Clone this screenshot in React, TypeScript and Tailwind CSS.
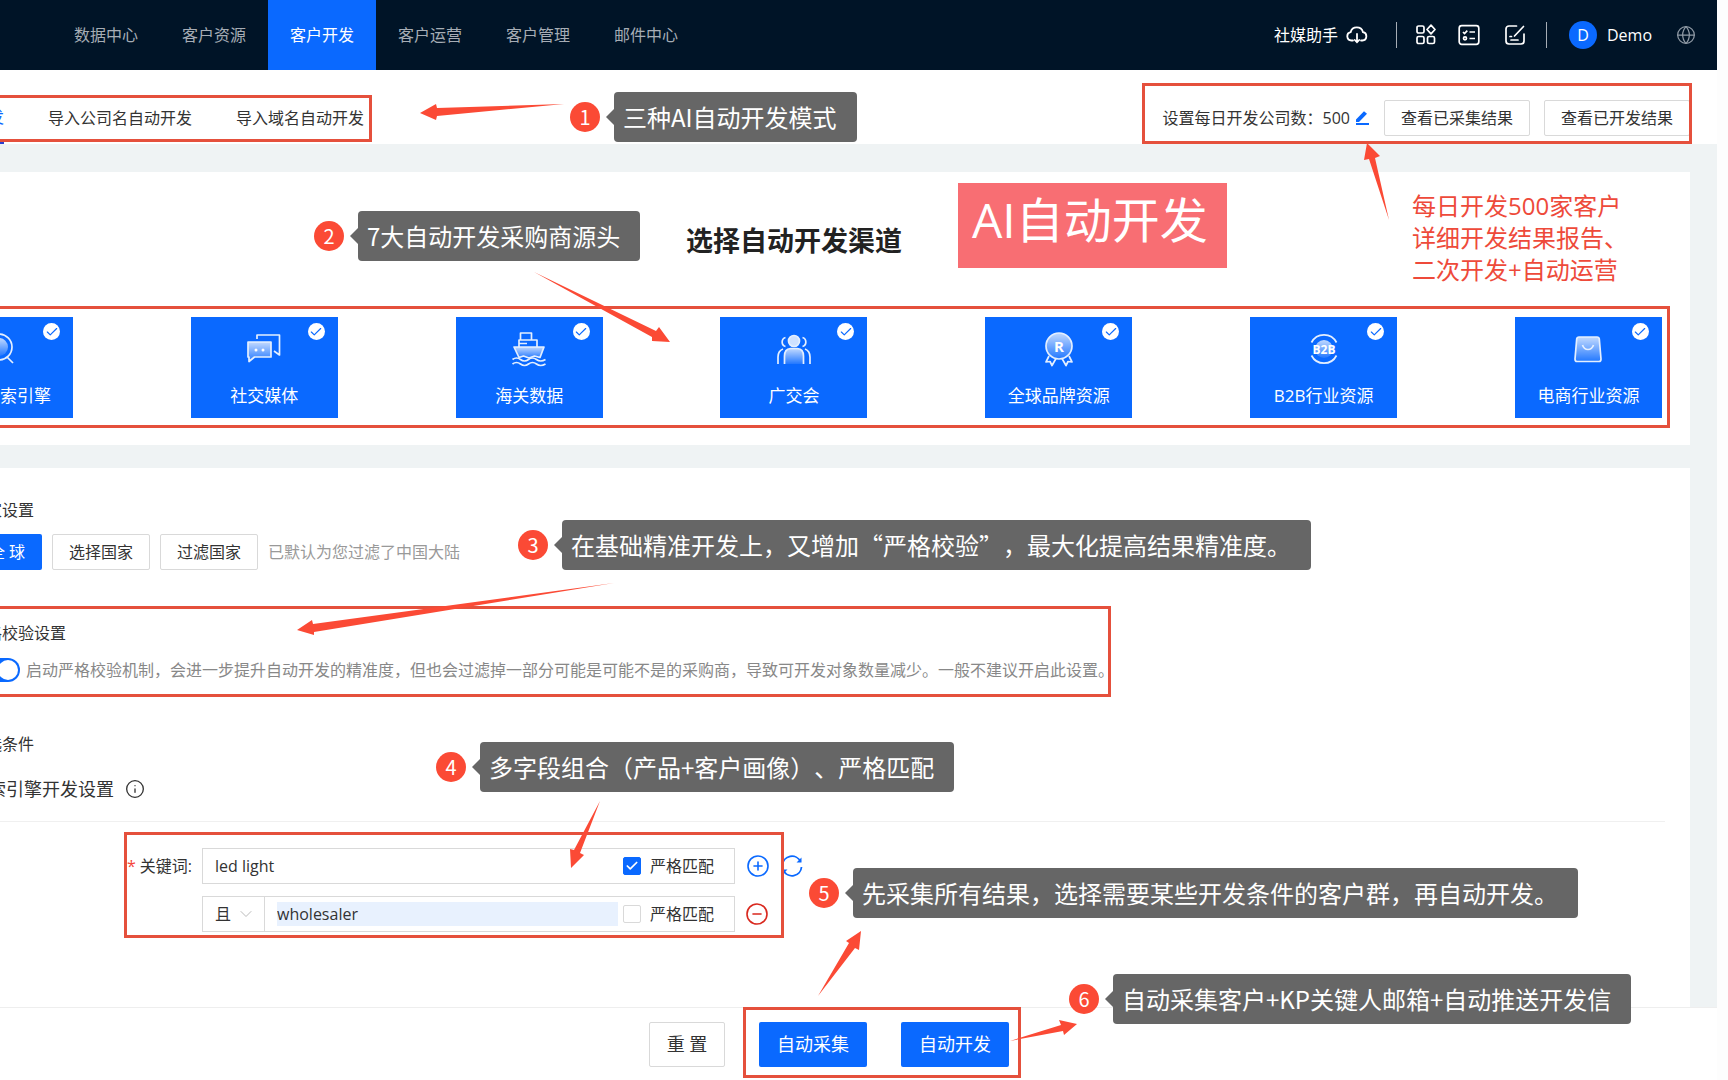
import { useState } from "react";
import type { ReactNode } from "react";
import { CirclePlus, CircleMinus, Check, ChevronDown, Globe, Info } from "lucide-react";

const navItems = ["数据中心", "客户资源", "客户开发", "客户运营", "客户管理", "邮件中心"];

function Header() {
  return (
    <header className="flex h-[70px] shrink-0 items-center justify-between bg-[#001427] pl-[52px] text-base text-white">
      <nav className="flex h-full">
        {navItems.map((item) => (
          <a
            key={item}
            href="#"
            className={`flex h-full items-center px-[22px] ${
              item === "客户开发" ? "bg-[#0a69ff] text-white" : "text-[#a6adb5]"
            }`}
          >
            {item}
          </a>
        ))}
      </nav>
      <div className="flex items-center pr-[21px]">
        <a href="#" className="flex items-center gap-2">
          社媒助手
          <svg className="h-5 w-[22px]" viewBox="0 0 22 20" fill="none" stroke="currentColor" strokeWidth="1.8" strokeLinecap="round">
            <path d="M7 15.5H5.4A4.2 4.2 0 0 1 4.6 7.2 6.4 6.4 0 0 1 17 7.2a4.2 4.2 0 0 1-.6 8.3H15" />
            <path d="M11 9v8M8.8 15l2.2 2.3 2.2-2.3" />
          </svg>
        </a>
        <span className="ml-7 h-[26px] w-px bg-[#a6adb5]" />
        <button type="button" aria-label="应用" className="ml-[18px]">
          <svg className="h-[22px] w-[22px]" viewBox="0 0 22 22" fill="none" stroke="currentColor" strokeWidth="1.7">
            <rect x="2" y="2" width="7" height="7" rx="1.6" />
            <rect x="2" y="12.5" width="7" height="7" rx="1.6" />
            <rect x="12.5" y="12.5" width="7" height="7" rx="1.6" />
            <path d="M16 1.2 20 5.5 16 9.8 12 5.5Z" strokeLinejoin="round" />
          </svg>
        </button>
        <button type="button" aria-label="任务" className="ml-[21px]">
          <svg className="h-[22px] w-[22px]" viewBox="0 0 22 22" fill="none" stroke="currentColor" strokeWidth="1.7">
            <rect x="1.2" y="1.7" width="19.6" height="18.6" rx="2.5" />
            <path d="M5 8l1.5 1.5L9.3 6.6M11.5 8H17M11.5 14.5H17" />
            <circle cx="7" cy="14.3" r="1.5" />
          </svg>
        </button>
        <button type="button" aria-label="编辑" className="ml-6">
          <svg className="h-[22px] w-[22px]" viewBox="0 0 22 22" fill="none" stroke="currentColor" strokeWidth="1.7" strokeLinecap="round">
            <path d="M12.5 2H5a3 3 0 0 0-3 3v12a3 3 0 0 0 3 3h12a3 3 0 0 0 3-3v-7M19.5 2.5 10.5 12M6 12.5h1.5M7 16h7" />
          </svg>
        </button>
        <span className="ml-5 h-[26px] w-px bg-[#a6adb5]" />
        <span className="ml-[22px] flex h-7 w-7 items-center justify-center rounded-full bg-[#0a69ff] text-base">D</span>
        <span className="ml-[10px]">Demo</span>
        <Globe className="ml-6 h-5 w-5 text-[#8f9aa5]" strokeWidth={1.5} />
      </div>
    </header>
  );
}

function OutlineButton({ children }: { children: ReactNode }) {
  return (
    <button type="button" className="h-9 rounded-xs border border-[#d9d9d9] bg-white px-4 text-base whitespace-nowrap text-[#333]">
      {children}
    </button>
  );
}

function Tabs() {
  return (
    <div className="flex h-[74px] shrink-0 items-center justify-between bg-white pt-[22px] pr-[27px] text-base text-[#333]">
      <div className="flex h-full items-center gap-11">
        <a href="#" className="-ml-3 flex h-full items-center border-b-2 border-[#2b3fd0] text-[#0a69ff]">
          发
        </a>
        <a href="#">导入公司名自动开发</a>
        <a href="#">导入域名自动开发</a>
      </div>
      <div className="flex items-center">
        <span>设置每日开发公司数：500</span>
        <button type="button" aria-label="修改" className="mr-[14px] ml-1">
          <svg className="h-4 w-4" viewBox="0 0 16 16" fill="#0a69ff">
            <path d="M2 9.5 10 1.2l3 2.6-8 8.2H2zM2 13h13v2H2z" />
          </svg>
        </button>
        <div className="flex gap-[14px]">
          <OutlineButton>查看已采集结果</OutlineButton>
          <OutlineButton>查看已开发结果</OutlineButton>
        </div>
      </div>
    </div>
  );
}

function IconBox({ children, shift = false }: { children: ReactNode; shift?: boolean }) {
  return (
    <svg
      className={`h-9 w-9 ${shift ? "-ml-[19px] self-start" : ""}`}
      viewBox="0 0 36 36"
      fill="none"
      stroke="#e4efff"
      strokeWidth="1.7"
      strokeLinejoin="round"
    >
      <defs>
        <linearGradient id="tint" x1="0" y1="0" x2="0" y2="1">
          <stop offset="0" stopColor="#fff" stopOpacity="0.75" />
          <stop offset="1" stopColor="#fff" stopOpacity="0.1" />
        </linearGradient>
      </defs>
      {children}
    </svg>
  );
}

const channels = [
  {
    name: "索引擎",
    icon: (
      <>
        <circle cx="18" cy="16" r="13" />
        <circle cx="18" cy="16" r="9" fill="url(#tint)" stroke="none" />
        <path d="M26 26l6 6" />
      </>
    ),
  },
  {
    name: "社交媒体",
    icon: (
      <>
        <path d="M2 11h23v15H8.500L3 30.500V26H2z" fill="url(#tint)" />
        <path d="M11 8V4h22.500v20L28 20" />
        <g fill="#fff" stroke="none">
          <circle cx="10" cy="19" r="1.5" />
          <circle cx="17" cy="19" r="1.5" />
        </g>
      </>
    ),
  },
  {
    name: "海关数据",
    icon: (
      <>
        <path d="M3 16h30l-4 10.500-5.500-1.500-5.500 2-5.500-2L8 26.500z" fill="url(#tint)" />
        <path d="M8 16V9h18v7M9.500 9V2h11v7M8 12.500h8" />
        <path d="M1.500 28.500q4-3 8 0t8 0 8 0 9 0M1.500 33q4-3 8 0t8 0 8 0 9 0" />
      </>
    ),
  },
  {
    name: "广交会",
    icon: (
      <>
        <circle cx="18" cy="10" r="5.5" fill="#fff" fillOpacity="0.8" />
        <path d="M8.500 33V25q0-7 6-7.500h7q6 .5 6 7.500v8" fill="url(#tint)" />
        <path d="M9.500 6.500a4.700 4.700 0 0 0 0 9M26.500 6.500a4.700 4.700 0 0 1 0 9M2 33v-7q0-6 5-8M34 33v-7q0-6-5-8" />
      </>
    ),
  },
  {
    name: "全球品牌资源",
    icon: (
      <>
        <circle cx="18" cy="15" r="13" fill="url(#tint)" />
        <path d="M8 25l-3 6 4-.5 2 4 4-7M28 25l3 6-4-.5-2 4-4-7" />
        <text x="18" y="21" textAnchor="middle" fontSize="15" fontWeight="700" fill="#fff" stroke="none">R</text>
      </>
    ),
  },
  {
    name: "B2B行业资源",
    icon: (
      <>
        <circle cx="18" cy="18" r="9" fill="url(#tint)" stroke="none" />
        <path d="M5.500 11.500a14 14 0 0 1 25 0M5.500 24.500a14 14 0 0 0 25 0" />
        <text x="18" y="22.5" textAnchor="middle" fontSize="12" fontWeight="700" fill="#fff" stroke="none">B2B</text>
      </>
    ),
  },
  {
    name: "电商行业资源",
    icon: (
      <>
        <path d="M9 6h18q2 0 2.300 2L31 28q0 2.500-2 2.500H7q-2 0-2-2.500L6.700 8Q7 6 9 6z" fill="url(#tint)" />
        <path d="M12.500 14q1.500 4.500 5.500 4.500t5.500-4.500" />
      </>
    ),
  },
];

function ChannelPanel() {
  return (
    <section className="mt-7 mr-[27px] bg-white pt-[51px] pb-[27px]">
      <h2 className="ml-[686px] text-[27px] leading-9 font-bold text-[#222]">选择自动开发渠道</h2>
      <div className="mt-[58px] mr-7 flex justify-between">
        {channels.map((c, i) => (
          <button
            key={c.name}
            type="button"
            className={`relative flex h-[101px] flex-col bg-[#0a69ff] pt-[14px] text-[17px] leading-6 text-white ${
              i === 0 ? "w-[73px] items-start" : "w-[147px] items-center"
            }`}
          >
            <IconBox shift={i === 0}>{c.icon}</IconBox>
            <span className="mt-[17px]">{c.name}</span>
            <span className="absolute top-[6px] right-[13px] flex h-[17px] w-[17px] items-center justify-center rounded-full bg-white">
              <Check className="h-[14px] w-[14px] text-[#0a69ff]" strokeWidth={2} />
            </span>
          </button>
        ))}
      </div>
    </section>
  );
}

function StrictBox({ id, defaultChecked }: { id: string; defaultChecked: boolean }) {
  const [checked, setChecked] = useState(defaultChecked);
  return (
    <label htmlFor={id} className="flex items-center gap-[9px] pr-5 whitespace-nowrap">
      <span className="relative flex h-[18px] w-[18px]">
        <input
          id={id}
          type="checkbox"
          checked={checked}
          onChange={() => setChecked(!checked)}
          className="h-[18px] w-[18px] appearance-none rounded-xs border border-[#d9d9d9] bg-white checked:border-[#0a69ff] checked:bg-[#0a69ff]"
        />
        {checked && <Check className="pointer-events-none absolute top-[2px] left-[2px] h-[14px] w-[14px] text-white" strokeWidth={3} />}
      </span>
      严格匹配
    </label>
  );
}

function SettingsPanel() {
  return (
    <section className="mt-[23px] mr-[27px] flex-1 bg-white pt-[30px] text-base text-[#333]">
      <h3 className="-ml-3.5 leading-6">家设置</h3>
      <div className="mt-3 flex items-center gap-[10px]">
        <button type="button" className="-ml-7 h-9 w-[70px] rounded-xs bg-[#0a69ff] text-white">
          全 球
        </button>
        <OutlineButton>选择国家</OutlineButton>
        <OutlineButton>过滤国家</OutlineButton>
        <span className="text-[#999]">已默认为您过滤了中国大陆</span>
      </div>

      <h3 className="mt-[51px] -ml-3.5 leading-6">格校验设置</h3>
      <div className="mt-[13px] flex items-center">
        <label className="flex items-center whitespace-nowrap text-[#888]">
          <input
            type="checkbox"
            role="switch"
            defaultChecked
            className="-ml-6 h-6 w-11 appearance-none rounded-full bg-[#0a69ff] before:mt-[2px] before:ml-[22px] before:block before:h-5 before:w-5 before:rounded-full before:bg-white"
          />
          <span className="ml-1.5">
            启动严格校验机制，会进一步提升自动开发的精准度，但也会过滤掉一部分可能是可能不是的采购商，导致可开发对象数量减少。一般不建议开启此设置。
          </span>
        </label>
      </div>

      <h3 className="mt-[50px] -ml-3.5 leading-6">选条件</h3>
      <div className="mr-[25px] flex items-center gap-[11px] border-b border-[#f0f0f0] pt-[21px] pb-5">
        <h4 className="-ml-3 text-lg leading-6">索引擎开发设置</h4>
        <Info className="h-5 w-5" strokeWidth={1.6} />
      </div>

      <div className="mt-[26px] flex items-center">
        <label htmlFor="kw" className="w-[202px] pl-[127px]">
          <span className="mr-1 text-[#f5463a]">*</span>关键词:
        </label>
        <div className="flex h-9 w-[533px] items-center border border-[#d9d9d9]">
          <input id="kw" defaultValue="led light" className="min-w-0 flex-1 px-3 outline-none" />
          <StrictBox id="strict-1" defaultChecked />
        </div>
        <button type="button" aria-label="添加" className="ml-[11px] text-[#0a69ff]">
          <CirclePlus className="h-6 w-6" strokeWidth={1.6} />
        </button>
        <button type="button" aria-label="刷新" className="ml-[10px] text-[#0a69ff]">
          <svg className="h-6 w-6" viewBox="0 0 24 24" fill="none" stroke="currentColor" strokeWidth="1.8">
            <path d="M2.500 11a9.500 9.500 0 0 1 18-3.500M21.500 13a9.500 9.500 0 0 1-18 3.500" />
            <path d="M21.500 3.500v5h-5zM2.500 20.500v-5h5z" fill="currentColor" stroke="none" />
          </svg>
        </button>
      </div>
      <div className="mt-3 ml-[202px] flex items-center">
        <div className="flex h-9 w-[533px] items-center border border-[#d9d9d9]">
          <div className="relative flex h-full w-[62px] items-center border-r border-[#d9d9d9]">
            <select aria-label="条件关系" className="h-full w-full appearance-none pl-3 outline-none">
              <option>且</option>
            </select>
            <ChevronDown className="pointer-events-none absolute right-2 h-5 w-5 text-[#bbb]" strokeWidth={1.2} />
          </div>
          <input
            aria-label="附加关键词"
            defaultValue="wholesaler"
            className="mr-[5px] ml-3 h-6 min-w-0 flex-1 bg-[#e8f1fe] outline-none"
          />
          <StrictBox id="strict-2" defaultChecked={false} />
        </div>
        <button type="button" aria-label="删除" className="ml-[10px] text-[#d9281e]">
          <CircleMinus className="h-6 w-6" strokeWidth={1.6} />
        </button>
      </div>
    </section>
  );
}

function Footer() {
  return (
    <footer className="flex h-[73px] shrink-0 items-center justify-center border-t border-[#eee] bg-white pr-[59px] text-lg">
      <button type="button" className="h-[45px] w-[76px] rounded-xs border border-[#d9d9d9] bg-white text-[#333]">重 置</button>
      <button type="button" className="ml-[34px] h-[45px] w-[108px] rounded-xs bg-[#0a69ff] text-white">自动采集</button>
      <button type="button" className="ml-[34px] h-[45px] w-[108px] rounded-xs bg-[#0a69ff] text-white">自动开发</button>
    </footer>
  );
}

function Callout({ n, place, children }: { n: number; place: string; children: ReactNode }) {
  return (
    <div className={`absolute flex items-center font-['Noto_Sans_CJK_SC',sans-serif] ${place}`}>
      <span className="flex h-[30px] w-[30px] items-center justify-center rounded-full bg-[#fb4a35] text-xl text-white">{n}</span>
      <span className="ml-1.5 border-y-[8px] border-r-[8px] border-y-transparent border-r-[#666]" />
      <span className="rounded bg-[#666] pr-5 pl-[9px] text-2xl leading-[50px] whitespace-nowrap text-white">{children}</span>
    </div>
  );
}

const frames = [
  "top-[95px] left-0 h-[47px] w-[372px] border-l-0",
  "top-[83px] left-[1142px] h-[61px] w-[550px]",
  "top-[306px] left-0 h-[122px] w-[1670px] border-l-0",
  "top-[606px] left-0 h-[91px] w-[1111px] border-l-0",
  "top-[832px] left-[124px] h-[106px] w-[660px]",
  "top-[1007px] left-[743px] h-[71px] w-[278px]",
];

// tip, head and tapered tail of each hand-drawn arrow
const arrows = [
  "420,113 436,104 437,108 564,104 437,116 436,120",
  "1367,143 1380,156 1375,158 1389,220 1369,159 1364,160",
  "670,342 659,327 656,331 534,272 652,337 652,341",
  "297,630 312,620 313,624 614,583 314,632 314,635",
  "571,868 570,849 574,850 600,801 580,853 584,855",
  "861,931 846,941 849,943 818,996 855,948 859,950",
  "1077,1024 1059,1020 1061,1025 1010,1041 1063,1031 1064,1035",
];

function Annotations() {
  return (
    <div className="pointer-events-none absolute inset-0 overflow-hidden">
      {frames.map((f) => (
        <div key={f} className={`absolute border-3 border-[#e5503c] ${f}`} />
      ))}
      <svg className="absolute inset-0 h-full w-full" fill="#fb4a35">
        {arrows.map((a) => (
          <polygon key={a} points={a} />
        ))}
      </svg>
      <Callout n={1} place="top-[92px] left-[570px]">三种AI自动开发模式</Callout>
      <Callout n={2} place="top-[211px] left-[314px]">7大自动开发采购商源头</Callout>
      <Callout n={3} place="top-[520px] left-[518px]">在基础精准开发上，又增加“严格校验”，最大化提高结果精准度。</Callout>
      <Callout n={4} place="top-[742px] left-[436px]">多字段组合（产品+客户画像）、严格匹配</Callout>
      <Callout n={5} place="top-[868px] left-[809px]">先采集所有结果，选择需要某些开发条件的客户群，再自动开发。</Callout>
      <Callout n={6} place="top-[974px] left-[1069px]">自动采集客户+KP关键人邮箱+自动推送开发信</Callout>
      <div className="absolute top-[183px] left-[958px] h-[85px] w-[269px] bg-[#f86e73] pl-[14px] text-5xl leading-[74px] whitespace-nowrap text-white">
        AI自动开发
      </div>
      <p className="absolute top-[190px] left-[1412px] text-2xl leading-8 whitespace-nowrap text-[#ee4a3a]">
        每日开发500家客户
        <br />
        详细开发结果报告、
        <br />
        二次开发+自动运营
      </p>
    </div>
  );
}

export default function App() {
  return (
    <div
      lang="zh-CN"
      className="relative min-h-screen overflow-hidden bg-[#fdfdfd] pr-[11px] font-['Open_Sans','Noto_Sans_CJK_SC',sans-serif] [text-spacing-trim:space-all]"
    >
      <div className="flex min-h-screen flex-col bg-[#eff3f4]">
        <Header />
        <Tabs />
        <ChannelPanel />
        <SettingsPanel />
        <Footer />
      </div>
      <Annotations />
    </div>
  );
}
